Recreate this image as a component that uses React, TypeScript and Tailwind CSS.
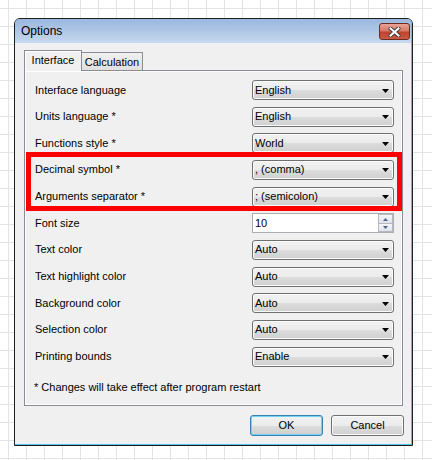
const font = "font-['Liberation_Sans',Arial,sans-serif]";

type Row = { label: string; value: string; kind?: "spin" };

const rows: Row[] = [
  { label: "Interface language", value: "English" },
  { label: "Units language *", value: "English" },
  { label: "Functions style *", value: "World" },
  { label: "Decimal symbol *", value: ", (comma)" },
  { label: "Arguments separator *", value: "; (semicolon)" },
  { label: "Font size", value: "10", kind: "spin" },
  { label: "Text color", value: "Auto" },
  { label: "Text highlight color", value: "Auto" },
  { label: "Background color", value: "Auto" },
  { label: "Selection color", value: "Auto" },
  { label: "Printing bounds", value: "Enable" },
];

const Combo = ({ value }: { value: string }) => (
  <div className="flex h-[20px] w-[142px] items-center justify-between rounded-[3px] border border-[#707070] bg-[linear-gradient(to_bottom,#f2f2f2_0%,#ebebeb_50%,#dddddd_50%,#cfcfcf_100%)] pl-[2px] pr-[4px] shadow-[inset_0_0_0_1px_#fbfbfb]">
    <span className="leading-[13px]">{value}</span>
    <svg width="7" height="4" viewBox="0 0 7 4" className="mt-[1px]">
      <path d="M0 0H7L3.5 4Z" fill="#000" />
    </svg>
  </div>
);

const Spin = ({ value }: { value: string }) => (
  <div className="flex h-[20px] w-[142px] items-center justify-between border border-[#abadb3] bg-white pl-[2px]">
    <span className="leading-[13px]">{value}</span>
    <div className="flex h-full w-[15px] flex-col">
      <div className="flex flex-1 items-center justify-center border border-[#b5b8c0] bg-[linear-gradient(to_bottom,#f4f5f7,#dfe3ea)]">
        <svg width="5" height="3" viewBox="0 0 5 3">
          <path d="M0 3H5L2.5 0Z" fill="#4d6185" />
        </svg>
      </div>
      <div className="flex flex-1 items-center justify-center border border-t-0 border-[#b5b8c0] bg-[linear-gradient(to_bottom,#f4f5f7,#dfe3ea)]">
        <svg width="5" height="3" viewBox="0 0 5 3">
          <path d="M0 0H5L2.5 3Z" fill="#4d6185" />
        </svg>
      </div>
    </div>
  </div>
);

const Button = ({ label, primary }: { label: string; primary?: boolean }) => (
  <div
    className={
      primary
        ? "flex h-[21px] w-[73px] items-center justify-center rounded-[3px] border border-[#3c7fb1] bg-[linear-gradient(to_bottom,#f2f2f2_0%,#ebebeb_50%,#dddddd_50%,#cfcfcf_100%)] shadow-[inset_0_0_0_1px_#6fd2f4]"
        : "flex h-[21px] w-[73px] items-center justify-center rounded-[3px] border border-[#707070] bg-[linear-gradient(to_bottom,#f2f2f2_0%,#ebebeb_50%,#dddddd_50%,#cfcfcf_100%)] shadow-[inset_0_0_0_1px_#fbfbfb]"
    }
  >
    {label}
  </div>
);

export default function App() {
  return (
    <div
      className={`${font} h-[460px] w-[432px] bg-white bg-[linear-gradient(to_right,#e3e3e3_1px,transparent_1px),linear-gradient(to_bottom,#e3e3e3_1px,transparent_1px)] bg-[size:18px_18px] bg-[position:8px_8px] pl-[14px] pt-[18px] text-[11px] text-black`}
    >
      <div className="w-[399px] overflow-hidden rounded-t-[6px] border border-[#1e1e1e]">
        <div className="border-b border-r border-[#4fc3ec]">
          {/* title bar */}
          <div className="flex h-[24px] items-start justify-between bg-[linear-gradient(to_bottom,#9ab7de,#c5d8ee)] pl-[6px] pr-[1px]">
            <span className="mt-[5px] text-[12px] leading-[14px]">Options</span>
            <div className="mt-[4px] flex h-[17px] w-[31px] items-center justify-center rounded-[3px] border border-[#6d2b22] bg-[linear-gradient(to_bottom,#e8a496_0%,#d47a68_45%,#c0432f_55%,#c85a46_100%)]">
              <svg width="13" height="10" viewBox="0 0 13 10">
                <path d="M2.5 1.5L10.5 8.5M10.5 1.5L2.5 8.5" stroke="#3a3a3a" strokeWidth="4" strokeLinecap="round" />
                <path d="M2.5 1.5L10.5 8.5M10.5 1.5L2.5 8.5" stroke="#fff" strokeWidth="2" strokeLinecap="square" />
              </svg>
            </div>
          </div>

          {/* body */}
          <div className="flex flex-col bg-[#f0f0f0] pb-[8px] pl-[9px] pr-[8px] pt-[7px]">
            <div className="flex h-[20px] items-end">
              <div className="relative z-10 mb-[-1px] flex h-[21px] w-[58px] items-start justify-center border border-b-0 border-[#898c95] bg-[#f0f0f0] pt-[3px] shadow-[inset_1px_1px_0_#ffffff] leading-[13px]">
                Interface
              </div>
              <div className="flex h-[18px] w-[61px] items-start justify-center border border-b-0 border-l-0 border-[#898c95] bg-[linear-gradient(to_bottom,#f0f0f0,#e0e0e0)] pt-[3px] leading-[13px]">
                Calculation
              </div>
            </div>

            <div className="relative flex h-[336px] flex-col border border-[#898c95] pl-[10px] pr-[8px] pt-[9px] shadow-[inset_1px_1px_0_#ffffff,inset_-1px_-1px_0_#ffffff]">
              <div className="flex flex-col gap-[6.67px]">
                {rows.map((r) => (
                  <div key={r.label} className="flex h-[20px] items-center justify-between">
                    <span className="leading-[13px]">{r.label}</span>
                    {r.kind === "spin" ? <Spin value={r.value} /> : <Combo value={r.value} />}
                  </div>
                ))}
              </div>
              <div className="ml-[-1px] mt-[14px] leading-[13px]">* Changes will take effect after program restart</div>

              {/* red highlight annotation */}
              <div className="absolute left-[1px] top-[81px] h-[59px] w-[376px] border-[5px] border-[#ff0000]" />
            </div>

            <div className="mt-[9px] flex justify-end gap-[8px] pr-[-1px]">
              <Button label="OK" primary />
              <div className="mr-[-1px]">
                <Button label="Cancel" />
              </div>
            </div>
          </div>
        </div>
      </div>
    </div>
  );
}
